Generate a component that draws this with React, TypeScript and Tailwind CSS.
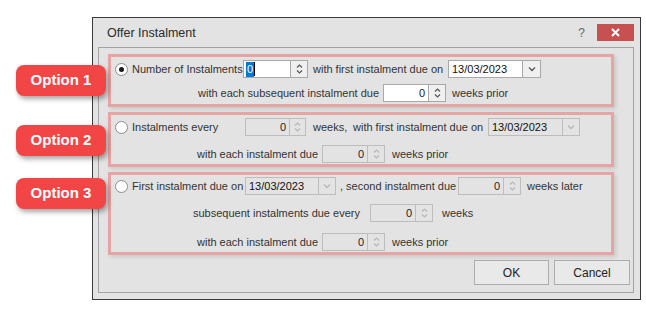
import type { ReactNode } from 'react'

function Radio({ checked }: { checked?: boolean }) {
  return (
    <div className="ml-[4px] w-[13px] h-[13px] shrink-0 rounded-full border border-[#8c8c8c] bg-white flex items-center justify-center">
      {checked && <div className="w-[5px] h-[5px] rounded-full bg-[#1a1a1a]" />}
    </div>
  )
}

function Label({ w, ml = 0, children }: { w?: number; ml?: number; children: ReactNode }) {
  return (
    <div
      className="shrink-0 whitespace-nowrap leading-[18px]"
      style={{ width: w, marginLeft: ml }}
    >
      {children}
    </div>
  )
}

function Chevrons({ enabled }: { enabled: boolean }) {
  return (
    <svg width="7" height="12" viewBox="0 0 7 12" fill="none" stroke={enabled ? '#555' : '#b8b8b8'} strokeWidth="1.2">
      <path d="M1 4.5L3.5 2L6 4.5" />
      <path d="M1 7.5L3.5 10L6 7.5" />
    </svg>
  )
}

function Spin({ w = 46, sw = 17, enabled = false, selected = false }: { w?: number; sw?: number; enabled?: boolean; selected?: boolean }) {
  const border = enabled ? 'border-[#a9a9a9]' : 'border-[#bdbdbd]'
  return (
    <div className="flex h-[18px] shrink-0">
      <div
        className={`h-full border ${border} ${enabled ? 'bg-white' : ''} flex items-center ${selected ? 'justify-start pl-[2px]' : 'justify-end pr-[3px]'}`}
        style={{ width: w }}
      >
        {selected ? (
          <>
            <span className="bg-[#0078d7] text-white leading-[15px] px-[1px]">0</span>
            <span className="w-[1px] h-[14px] bg-black" />
          </>
        ) : (
          <span className="leading-[16px] text-[#222]">0</span>
        )}
      </div>
      <div
        className={`h-full border border-l-0 ${border} ${enabled ? 'bg-[#f0f0f0]' : ''} flex items-center justify-center`}
        style={{ width: sw }}
      >
        <Chevrons enabled={enabled} />
      </div>
    </div>
  )
}

function DateBox({ w = 75, bw = 18, enabled = false }: { w?: number; bw?: number; enabled?: boolean }) {
  const border = enabled ? 'border-[#a9a9a9]' : 'border-[#bdbdbd]'
  return (
    <div className="flex h-[18px] shrink-0">
      <div className={`h-full border ${border} ${enabled ? 'bg-white' : ''} pl-[3px] leading-[16px] text-[#111]`} style={{ width: w }}>
        13/03/2023
      </div>
      <div className={`h-full border border-l-0 ${border} ${enabled ? 'bg-[#f0f0f0]' : ''} flex items-center justify-center`} style={{ width: bw }}>
        <svg width="8" height="6" viewBox="0 0 8 6" fill="none" stroke={enabled ? '#555' : '#b8b8b8'} strokeWidth="1.3">
          <path d="M1 1.5L4 4.5L7 1.5" />
        </svg>
      </div>
    </div>
  )
}

function Pill({ top, label }: { top: number; label: string }) {
  return (
    <div
      className="absolute left-[16px] w-[90px] h-[31px] rounded-[8px] bg-[#f24646] shadow-[2px_3px_5px_rgba(0,0,0,0.35)] flex items-center justify-center text-white font-bold text-[15px]"
      style={{ top }}
    >
      {label}
    </div>
  )
}

export default function App() {
  return (
    <div className="relative w-[646px] h-[310px] bg-white pl-[92px] pt-[17px] font-['Liberation_Sans',Arial,sans-serif] text-[11px] text-[#333]">
      <div className="w-[549px] h-[283px] border border-[#3a3a3a] bg-[#e3e3e3] flex flex-col">
        {/* title bar */}
        <div className="h-[29px] flex items-start shrink-0">
          <div className="pl-[14px] pt-[7px] text-[12.5px] leading-[16px] text-[#2b2b2b]">Offer Instalment</div>
          <div className="ml-auto mt-[9px] text-[12px] leading-[12px] text-[#666]">?</div>
          <div className="ml-[12px] mt-[6px] mr-[6px] w-[37px] h-[17px] bg-[#c75050] flex items-center justify-center">
            <svg width="9" height="9" viewBox="0 0 9 9" stroke="white" strokeWidth="2">
              <path d="M1 1L8 8M8 1L1 8" />
            </svg>
          </div>
        </div>

        {/* panel */}
        <div className="ml-[5px] w-[536px] h-[246px] border border-[#a3a3a3] flex flex-col">
          {/* Option 1 */}
          <div className="ml-[9px] mt-[6px] w-[506px] h-[53px] border-[3px] border-[#e6a4a4] shadow-[2px_2px_4px_rgba(0,0,0,0.12)] flex flex-col pt-[3px] gap-[6px]">
            <div className="flex items-center h-[18px]">
              <Radio checked />
              <Label ml={4} w={111}>Number of Instalments</Label>
              <Spin w={48} enabled selected />
              <Label ml={5} w={135}>with first instalment due on</Label>
              <DateBox enabled />
            </div>
            <div className="flex items-center h-[18px]">
              <Label ml={87} w={185}>with each subsequent instalment due</Label>
              <Spin enabled />
              <Label ml={6}>weeks prior</Label>
            </div>
          </div>

          {/* Option 2 */}
          <div className="ml-[9px] mt-[5px] w-[506px] h-[55px] border-[3px] border-[#e6a4a4] shadow-[2px_2px_4px_rgba(0,0,0,0.12)] flex flex-col pt-[3px] gap-[9px]">
            <div className="flex items-center h-[18px]">
              <Radio />
              <Label ml={4} w={113}>Instalments every</Label>
              <Spin w={45} sw={16} />
              <Label ml={7} w={40}>weeks,</Label>
              <Label w={135}>with first instalment due on</Label>
              <DateBox bw={17} />
            </div>
            <div className="flex items-center h-[18px]">
              <Label ml={86} w={125}>with each instalment due</Label>
              <Spin />
              <Label ml={7}>weeks prior</Label>
            </div>
          </div>

          {/* Option 3 */}
          <div className="ml-[9px] mt-[5px] w-[506px] h-[83px] border-[3px] border-[#e6a4a4] shadow-[2px_2px_4px_rgba(0,0,0,0.12)] flex flex-col pt-[2px]">
            <div className="flex items-center h-[18px]">
              <Radio />
              <Label ml={4} w={113}>First instalment due on</Label>
              <DateBox w={74} bw={17} />
              <Label ml={4} w={118}>, second instalment due</Label>
              <Spin />
              <Label ml={6}>weeks later</Label>
            </div>
            <div className="flex items-center h-[18px] mt-[9px]">
              <Label ml={82} w={177}>subsequent instalments due every</Label>
              <Spin />
              <Label ml={9}>weeks</Label>
            </div>
            <div className="flex items-center h-[18px] mt-[11px]">
              <Label ml={86} w={125}>with each instalment due</Label>
              <Spin />
              <Label ml={7}>weeks prior</Label>
            </div>
          </div>

          {/* buttons */}
          <div className="mt-[5px] mr-[3px] flex justify-end gap-[5px]">
            <button className="w-[75px] h-[25px] border border-[#adadad] bg-[#e9e9e9] text-[12px] text-[#222]">OK</button>
            <button className="w-[76px] h-[25px] border border-[#adadad] bg-[#e9e9e9] text-[12px] text-[#222]">Cancel</button>
          </div>
        </div>
      </div>

      <Pill top={65} label="Option 1" />
      <Pill top={125} label="Option 2" />
      <Pill top={178} label="Option 3" />
    </div>
  )
}
